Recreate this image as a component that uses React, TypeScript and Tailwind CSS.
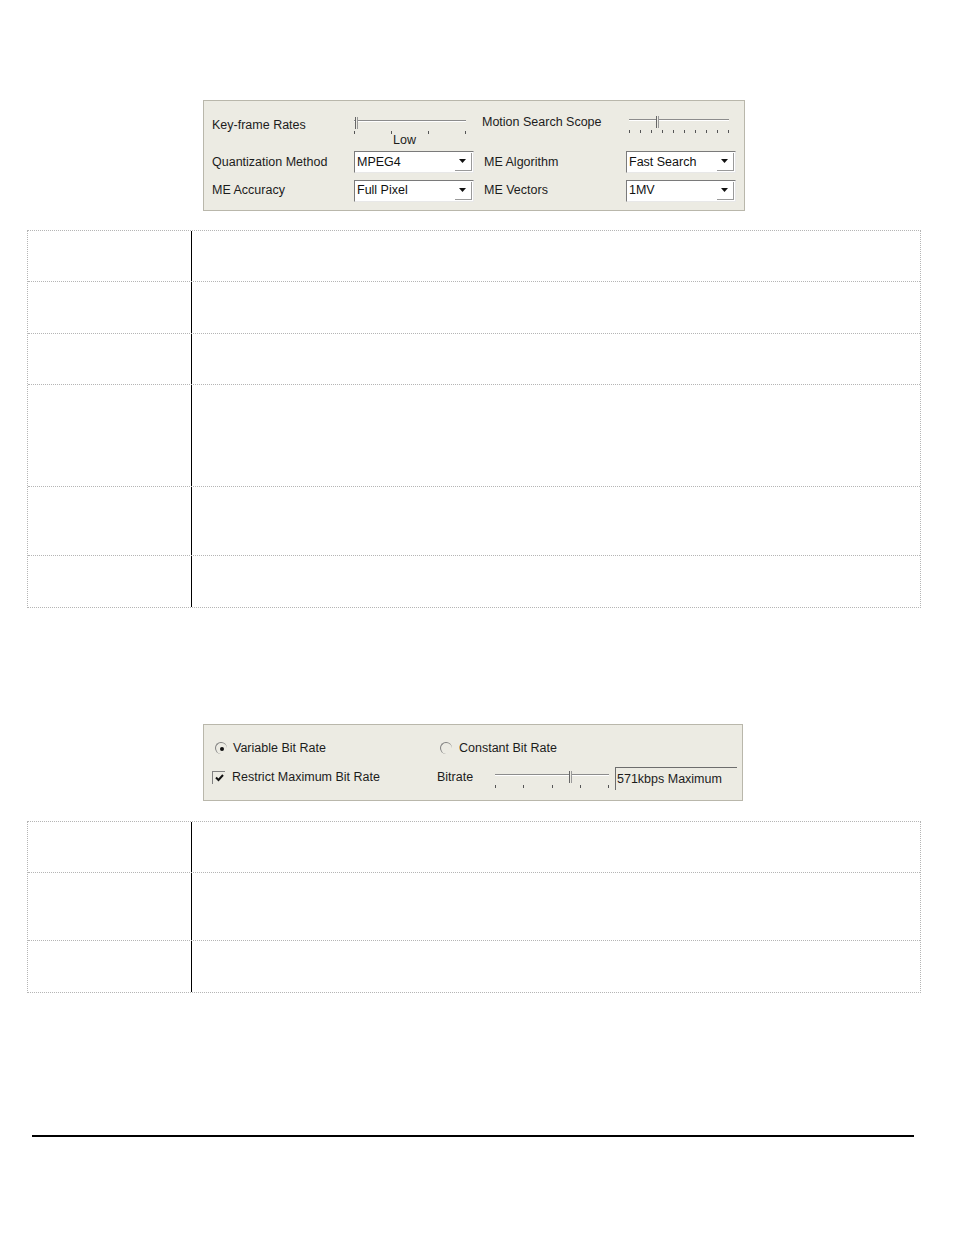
import React from "react";

const font = { fontFamily: '"Liberation Sans", Arial, sans-serif' };

const Ticks = ({ count, className }: { count: number; className?: string }) => (
  <div className={"flex justify-between " + (className ?? "")}>
    {Array.from({ length: count }).map((_, i) => (
      <span key={i} className="block h-[3px] w-px bg-[#555]" />
    ))}
  </div>
);

// trackbar: line near the top, ticks under it, small pointer thumb
const Slider = ({ width, thumb, ticks }: { width: number; thumb: number; ticks: number }) => (
  <div className="relative h-[18px]" style={{ width }}>
    <div className="absolute left-0 right-0 top-[3px] h-[2px] border-t border-[#8c8c8c] border-b border-b-white" />
    <div
      className="absolute top-0 h-[12px] w-[3px] border-l border-[#666] border-r border-r-[#999] bg-[#ecebe3]"
      style={{ left: thumb }}
    />
    <Ticks count={ticks} className="absolute left-0 right-0 top-[14px]" />
  </div>
);

const Select = ({ value, width }: { value: string; width: number }) => (
  <div
    className="flex h-[22px] items-center border-t border-l border-[#7a7a7a] border-b border-r border-b-[#e8e8e8] border-r-[#e8e8e8] bg-white"
    style={{ width }}
  >
    <span className="flex-1 pl-[2px] text-[12.5px] text-[#111]">{value}</span>
    <span className="mr-[1px] flex h-[18px] w-[17px] items-center justify-center border-b border-r border-[#9a9a9a] bg-white">
      <svg width="8" height="5" viewBox="0 0 8 5">
        <path d="M0 0h7L3.5 4z" fill="#111" />
      </svg>
    </span>
  </div>
);

const Label = ({ children, className }: { children: React.ReactNode; className?: string }) => (
  <span className={"text-[12.5px] text-[#1c1c1c] " + (className ?? "")}>{children}</span>
);

const Table = ({ rows }: { rows: number[] }) => (
  <div className="ml-[27px] w-[894px] border border-dotted border-[#b5b5b5]">
    {rows.map((h, i) => (
      <div
        key={i}
        className={"flex " + (i < rows.length - 1 ? "border-b border-dotted border-[#b5b5b5]" : "")}
        style={{ height: h }}
      >
        <div className="w-[164px] border-r-[1.5px] border-black" />
        <div className="flex-1" />
      </div>
    ))}
  </div>
);

const App = () => {
  return (
    <div className="h-[1235px] w-[954px] overflow-hidden bg-white" style={font}>
      {/* video quality panel */}
      <div className="ml-[203px] mt-[100px] h-[111px] w-[542px] border border-[#b9b7ab] bg-[#ecebe3] pl-[8px]">
        <div className="flex h-[47px]">
          <Label className="mt-[15px] w-[142px]">Key-frame Rates</Label>
          <div className="mt-[16px] flex flex-col">
            <Slider width={112} thumb={1} ticks={4} />
            <Label className="ml-[39px] -mt-[2px] leading-[14px]">Low</Label>
          </div>
          <Label className="ml-[16px] mt-[12px] w-[147px]">Motion Search Scope</Label>
          <div className="mt-[15px]">
            <Slider width={100} thumb={27} ticks={10} />
          </div>
        </div>
        <div className="flex h-[28px] items-center">
          <Label className="w-[142px]">Quantization Method</Label>
          <Select value="MPEG4" width={120} />
          <Label className="ml-[10px] w-[142px]">ME Algorithm</Label>
          <Select value="Fast Search" width={110} />
        </div>
        <div className="flex h-[29px] items-center">
          <Label className="w-[142px]">ME Accuracy</Label>
          <Select value="Full Pixel" width={120} />
          <Label className="ml-[10px] w-[142px]">ME Vectors</Label>
          <Select value="1MV" width={110} />
        </div>
      </div>

      <div className="mt-[19px]">
        <Table rows={[51, 52, 51, 102, 69, 51]} />
      </div>

      {/* bit rate panel */}
      <div className="ml-[203px] mt-[116px] h-[77px] w-[540px] border border-[#b9b7ab] bg-[#ecebe3]">
        <div className="flex h-[42px] items-start pt-[14px]">
          <div className="ml-[11px] flex w-[225px] items-center gap-[6px]">
            <span className="flex h-[12px] w-[12px] items-center justify-center rounded-full border-t border-l border-[#808080]">
              <span className="h-[4px] w-[4px] rounded-full bg-[#111]" />
            </span>
            <Label>Variable Bit Rate</Label>
          </div>
          <div className="flex items-center gap-[7px]">
            <span className="h-[12px] w-[12px] rounded-full border-t border-l border-[#808080]" />
            <Label>Constant Bit Rate</Label>
          </div>
        </div>
        <div className="flex h-[33px] items-start">
          <div className="ml-[8px] mt-[1px] flex w-[225px] items-center gap-[7px]">
            <span className="flex h-[13px] w-[13px] items-center justify-center border-t border-l border-[#808080]">
              <svg width="9" height="8" viewBox="0 0 9 8">
                <path d="M1 3.5l2.5 2.5L8 1" stroke="#111" strokeWidth="2" fill="none" />
              </svg>
            </span>
            <Label>Restrict Maximum Bit Rate</Label>
          </div>
          <Label className="mt-[1px] w-[58px]">Bitrate</Label>
          <div className="mt-[4px]">
            <Slider width={114} thumb={74} ticks={5} />
          </div>
          <div className="ml-[6px] flex h-[23px] w-[122px] items-center border-t border-l border-[#6d6d6d] pl-[1px]">
            <Label>571kbps Maximum</Label>
          </div>
        </div>
      </div>

      <div className="mt-[20px]">
        <Table rows={[51, 68, 51]} />
      </div>

      <div className="ml-[32px] mt-[142px] h-[1.5px] w-[882px] bg-black" />
    </div>
  );
};

export default App;
